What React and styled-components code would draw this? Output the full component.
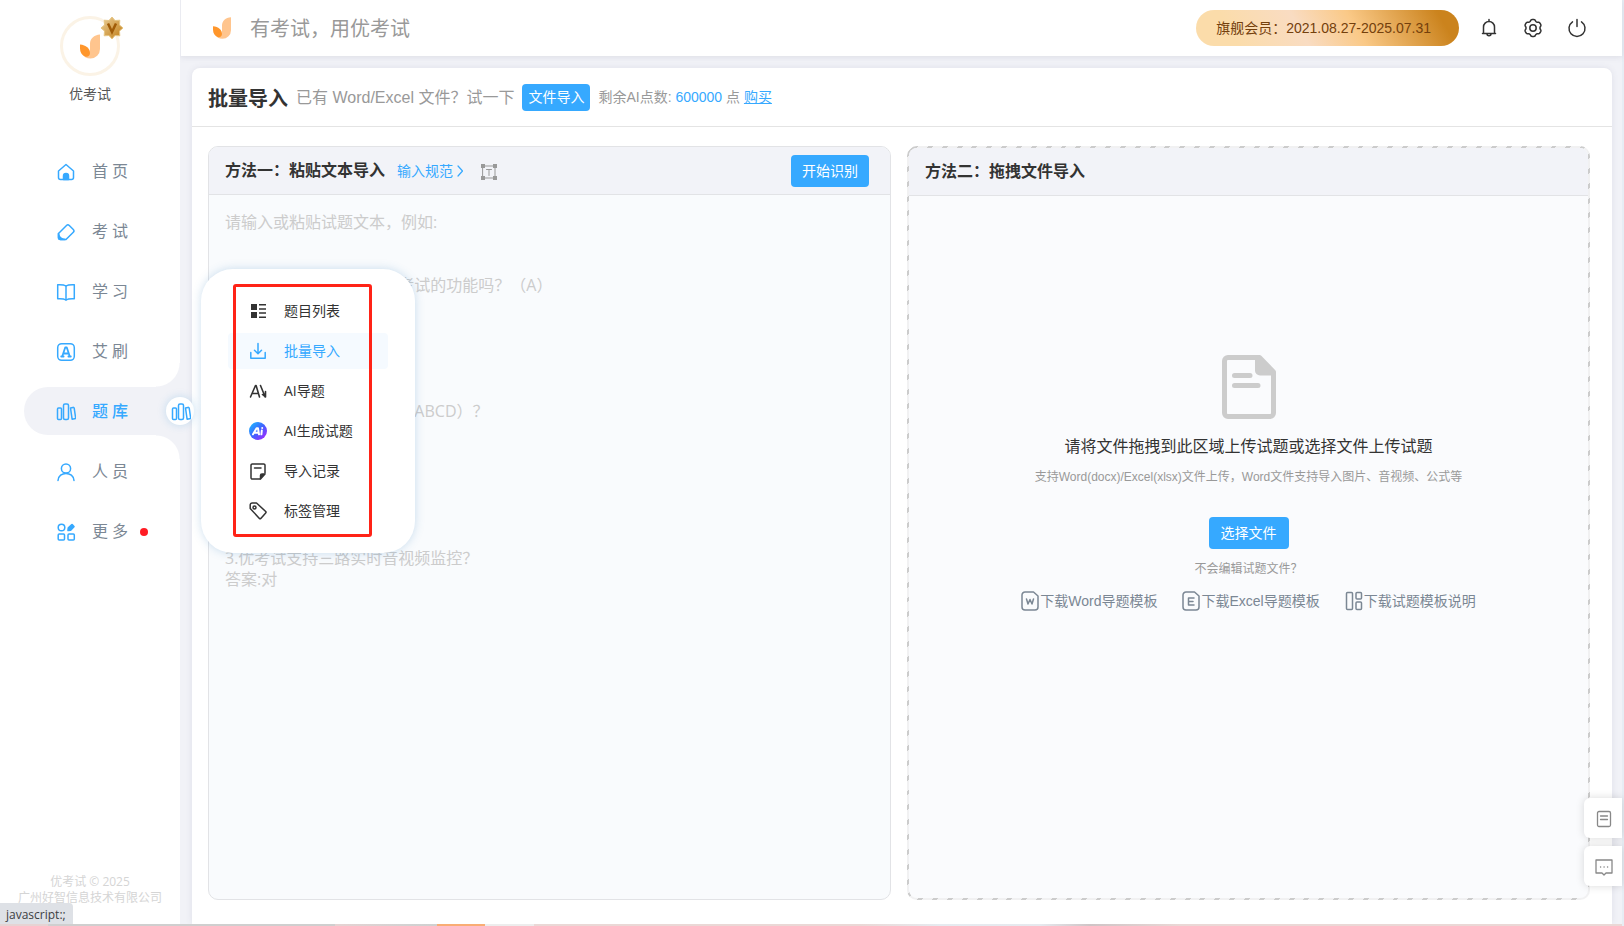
import React from "react";
import styled, { createGlobalStyle, css } from "styled-components";

const BLUE = "#36a9ff";
const CJK = `"Liberation Sans", "Noto Sans CJK SC", sans-serif`;
const UI = `"Open Sans", "Noto Sans CJK SC", sans-serif`;

const Global = createGlobalStyle`
  * { box-sizing: border-box; }
  html, body, #root { height: 100%; }
  body { margin: 0; background: #f1f2f7; font-family: ${CJK}; font-size: 14px; line-height: 20px; color: #333; overflow: hidden; }
  button, textarea, input { font: inherit; }
  button { border: 0; padding: 0; cursor: pointer; }
  svg { display: block; flex: none; }
  h1, h2, p, ul { margin: 0; padding: 0; }
`;

const Page = styled.div`
  min-height: 100vh;
  height: 100%;
  display: flex;
  flex-direction: column;
  border-right: 2px solid #e7edf4;
`;
const Shell = styled.div`
  flex: 1;
  min-height: 0;
  display: flex;
`;
const DesktopEdge = styled.div`
  height: 2px;
  background: linear-gradient(90deg, #e6d3d3 48px, #cfcfcf 48px, #cfcfcf 335px, #e6d3d3 335px, #d2d2d2 410px, #d0d0d0 437px, #f9ad74 437px, #f9ad74 485px, #ededed 485px, #ededed 534px, #ead8d6 534px, #ead8d6 860px, #e6ebf0 940px, #e6e9ee 1040px, #cfc4c6 1090px, #ead8d6 1180px);
`;

/* Sidebar */
const Sidebar = styled.aside`
  position: relative;
  width: 180px;
  flex: none;
  display: flex;
  flex-direction: column;
  background: #fff;
`;
const Profile = styled.div`
  height: 147px;
  padding-top: 16px;
  display: flex;
  flex-direction: column;
  align-items: center;
  gap: 8px;
  color: #555;
`;
const Avatar = styled.div`
  position: relative;
  width: 60px;
  height: 60px;
  border: 3px solid #fbf3e6;
  border-radius: 50%;
  display: flex;
  align-items: center;
  justify-content: center;
`;
const Badge = styled.span`
  position: absolute;
  top: -3px;
  right: -7px;
`;
const Nav = styled.nav`
  display: flex;
  flex-direction: column;
  gap: 12px;
  padding-left: 24px;
`;
const corner = css`
  content: "";
  position: absolute;
  right: 0;
  width: 24px;
  height: 24px;
`;
const NavItem = styled.a`
  position: relative;
  height: 48px;
  padding: 2px 0 0 32px;
  display: flex;
  align-items: center;
  gap: 16px;
  border-radius: 24px 0 0 24px;
  font-size: 16px;
  letter-spacing: 4px;
  text-decoration: none;
  color: #7b8794;
  ${(p) =>
    p.$active &&
    css`
      background: #f1f2f7;
      color: ${BLUE};
      font-weight: 500;
      &::before {
        ${corner}
        bottom: 100%;
        background: radial-gradient(circle at 0 0, #fff 23px, #f1f2f7 24px);
      }
      &::after {
        ${corner}
        top: 100%;
        background: radial-gradient(circle at 0 100%, #fff 23px, #f1f2f7 24px);
      }
    `}
`;
const Dot = styled.i`
  width: 8px;
  height: 8px;
  margin-left: -8px;
  border-radius: 50%;
  background: #ff1c24;
`;
const Copyright = styled.p`
  margin-top: auto;
  padding-bottom: 18px;
  text-align: center;
  font-size: 12px;
  line-height: 16px;
  color: #d5d5d5;
  font-family: ${UI};
`;
const Bubble = styled.button`
  position: absolute;
  z-index: 3;
  top: 397px;
  right: -14px;
  width: 28px;
  height: 28px;
  padding: 2px 0 0 2px;
  display: flex;
  align-items: center;
  justify-content: center;
  border-radius: 50%;
  background: #fff;
  box-shadow: 0 0 8px rgba(54, 150, 220, 0.25);
`;
const Flyout = styled.div`
  position: absolute;
  z-index: 4;
  top: 269px;
  left: 201px;
  width: 214px;
  padding: 24px 27px;
  display: flex;
  flex-direction: column;
  gap: 4px;
  border-radius: 32px;
  background: #fff;
  box-shadow: 0 0 10px rgba(60, 130, 190, 0.25);
`;
const FlyoutItem = styled.a`
  height: 36px;
  padding-left: 21px;
  display: flex;
  align-items: center;
  gap: 17px;
  border-radius: 4px;
  font-family: ${UI};
  color: ${(p) => (p.$active ? BLUE : "#333")};
  background: ${(p) => (p.$active ? "#f5faff" : "transparent")};
  text-decoration: none;
`;
const Highlight = styled.span`
  position: absolute;
  inset: 15px 43px 16px 32px;
  border: 3px solid #ff2317;
  border-radius: 3px;
  pointer-events: none;
`;
const StatusBar = styled.div`
  position: absolute;
  z-index: 5;
  left: 0;
  bottom: 0;
  height: 21px;
  padding: 0 7px 0 6px;
  border-radius: 0 4px 0 0;
  background: #dee1e6;
  font-family: "Open Sans", sans-serif;
  font-size: 12px;
  line-height: 24px;
  color: #3c4043;
`;

/* Top bar */
const Content = styled.div`
  flex: 1;
  min-width: 0;
  display: flex;
  flex-direction: column;
`;
const TopBar = styled.header`
  height: 56px;
  flex: none;
  padding: 0 35px 0 32px;
  display: flex;
  align-items: center;
  border-left: 1px solid #eaebf1;
  background: #fff;
  box-shadow: 0 1px 6px rgba(100, 100, 130, 0.15);
`;
const Slogan = styled.span`
  margin-left: 19px;
  padding-top: 2px;
  font-size: 20px;
  line-height: 28px;
  color: #999;
`;
const Member = styled.div`
  height: 36px;
  margin-left: auto;
  padding: 0 28px 0 20px;
  border-radius: 18px;
  line-height: 37px;
  color: #74400c;
  background: linear-gradient(60deg, #fbdcaa 15%, #f9dcc2 40%, #fac987 60%, #cb831d 92%);
`;
const Tools = styled.div`
  display: flex;
  gap: 24px;
  margin-left: 20px;
`;
const IconButton = styled.button`
  width: 20px;
  height: 20px;
  background: none;
  color: #333;
`;

/* Card */
const Card = styled.main`
  flex: 1;
  min-height: 0;
  margin: 12px 10px 0 12px;
  display: flex;
  flex-direction: column;
  border-radius: 8px 8px 0 0;
  background: #fff;
  box-shadow: 0 0 6px rgba(100, 100, 130, 0.12);
`;
const CardHead = styled.div`
  height: 59px;
  flex: none;
  padding: 0 16px;
  display: flex;
  align-items: center;
  gap: 8px;
  border-bottom: 1px solid #e4e4e4;
  color: #999;
`;
const Title = styled.h1`
  padding-top: 3px;
  font-size: 20px;
  line-height: 28px;
  font-weight: 700;
  color: #333;
`;
const Lead = styled.span`
  padding-top: 1px;
  font-size: 16px;
`;
const Primary = styled.button`
  height: ${(p) => (p.$small ? 27 : 32)}px;
  padding: 0 ${(p) => (p.$small ? 6 : p.$wide ? 12 : 11)}px;
  border-radius: 4px;
  background: ${BLUE};
  color: #fff;
`;
const Points = styled.span`
  b { font-weight: 400; color: ${BLUE}; }
`;
const Link = styled.a`
  color: ${BLUE};
  text-decoration: ${(p) => (p.$plain ? "none" : "underline")};
  display: ${(p) => (p.$plain ? "inline-flex" : "inline")};
  align-items: center;
  gap: 4px;
`;
const Panels = styled.div`
  flex: 1;
  min-height: 0;
  padding: 19px 22px 24px 16px;
  display: grid;
  grid-template-columns: 1fr 1fr;
  gap: 16px;
`;
const Panel = styled.section`
  min-width: 0;
  display: flex;
  flex-direction: column;
  overflow: hidden;
  border: 1px solid #e2e3e6;
  border-radius: 10px;
  background: #f9fbfd;
`;
const DropPanel = styled(Panel)`
  border: 2px solid transparent;
  background:
    linear-gradient(#fafbfd, #fafbfd) padding-box,
    repeating-linear-gradient(-45deg, #ccc 0, #ccc 0.25em, #f1f1f2 0, #f1f1f2 0.75em) border-box;
`;
const PanelHead = styled.div`
  height: 48px;
  flex: none;
  padding: 0 21px 0 16px;
  display: flex;
  align-items: center;
  gap: 12px;
  border-bottom: 1px solid #e2e3e6;
  background: #f2f3f8;
`;
const PanelTitle = styled.h2`
  font-size: 16px;
  line-height: 24px;
  font-weight: 700;
`;
const ImageTool = styled.button`
  margin-left: 4px;
  padding-top: 2px;
  background: none;
`;
const Push = styled.div`
  margin-left: auto;
`;
const Editor = styled.textarea`
  flex: 1;
  padding: 17px 16px;
  border: 0;
  outline: 0;
  resize: none;
  background: transparent;
  font-family: ${UI};
  font-size: 16px;
  line-height: 21px;
  &::placeholder { color: #ccc; opacity: 1; }
`;
const DropBody = styled.div`
  flex: 1;
  padding-top: 159px;
  display: flex;
  flex-direction: column;
  align-items: center;
`;
const DropTitle = styled.p`
  margin-top: 16px;
  font-size: 16px;
  line-height: 24px;
`;
const Note = styled.p`
  margin: ${(p) => (p.$wide ? "8px 0 30px" : "10px 0 12px")};
  font-size: 12px;
  line-height: 20px;
  color: #999;
`;
const Downloads = styled.div`
  display: flex;
  gap: 25px;
`;
const Download = styled.a`
  display: flex;
  align-items: center;
  gap: 1px;
  color: #7b8794;
  text-decoration: none;
`;
const Float = styled.div`
  position: absolute;
  right: 2px;
  bottom: 40px;
  display: flex;
  flex-direction: column;
  gap: 8px;
`;
const FloatButton = styled.button`
  width: 38px;
  height: 40px;
  padding: 2px 0 0 2px;
  display: flex;
  align-items: center;
  justify-content: center;
  border-radius: 6px 0 0 6px;
  background: #fff;
  box-shadow: 0 0 8px rgba(0, 0, 0, 0.15);
`;

/* Icons */
const Svg = ({ s = 20, w = s, vb = "0 0 20 20", sw = 1.5, c = "currentColor", children }) => (
  <svg width={w} height={s} viewBox={vb} fill="none" stroke={c} strokeWidth={sw} strokeLinecap="round" strokeLinejoin="round" aria-hidden="true">
    {children}
  </svg>
);
const Logo = ({ w, h }) => (
  <svg width={w} height={h} viewBox="0 0 20 24" aria-hidden="true">
    <path d="M20 0v14.500A9.500 9.500 0 0 1 10.500 24C6.500 24 3.500 22 2 19c4 3 8 1.500 8-2.500V9.500C10 4 14 .5 20 0Z" fill="#ffc58e" />
    <path d="M0 10c6 .5 10 4 10 8.500 0 3-2.500 4.500-5 3.500C2 20.500 0 18 0 14Z" fill="#ff962b" />
  </svg>
);
const icons = {
  home: <><path d="M2.500 9 10 2.500 17.500 9v6.500a2 2 0 0 1-2 2h-11a2 2 0 0 1-2-2Z" /><path d="M7.500 17.500V14a2.500 2.500 0 0 1 5 0v3.500Z" fill={BLUE} /></>,
  pen: <><path d="M10.500 3.500a2 2 0 0 1 2.800 0l4 4a2 2 0 0 1 0 2.800L10 17.500H4.500a2 2 0 0 1-2-2v-4Z" /><path d="M2.500 11.500c.5 3 3 5.500 6.500 6H4.500a2 2 0 0 1-2-2Z" fill={BLUE} /></>,
  book: <><path d="M10 4C8 2.600 5 2.500 1.700 2.700v14C5 16.500 8 16.600 10 18c2-1.400 5-1.500 8.300-1.300v-14C15 2.500 12 2.600 10 4Z" /><path d="M10 4v14" /></>,
  brush: <><rect x="1.700" y="1.700" width="16.600" height="16.600" rx="4" /><path d="m6.200 14.500 3-9h1.600l3 9M7.500 11.500h5M5.200 14.500h2.400M12.400 14.500h2.400" strokeWidth="1.800" /></>,
  lib: <><rect x="1.500" y="6" width="4" height="11.500" rx="1" /><rect x="7.500" y="2" width="5" height="15.500" rx="1.500" /><path d="m14.500 6 2.500-.6a1 1 0 0 1 1.200.8l1.500 10.200-3.600.8Z" /></>,
  user: <><circle cx="10" cy="6.500" r="4.600" /><path d="M2 18.500c.5-9.500 15.500-9.500 16 0" /></>,
  more: <><circle cx="5.500" cy="5.500" r="3.300" /><rect x="2.200" y="12" width="6.300" height="6" rx="1" /><rect x="12" y="12" width="6.300" height="6" rx="1" /><path d="m12.500 6 3.500-3.200 1.800 1.800L14.500 8l-2.300.3Z" fill={BLUE} strokeWidth="2" /></>,
};

const NAV = [
  ["home", "首页"], ["pen", "考试"], ["book", "学习"], ["brush", "艾刷"],
  ["lib", "题库"], ["user", "人员"], ["more", "更多"],
];

const menuIcons = {
  list: <g stroke="none" fill="currentColor"><path d="M2 2h6v6H2zM2 10h6v6H2zM10 2h7v1.500h-7zM10 6.300h7v1.500h-7zM10 10.200h7v1.500h-7zM10 14.500h7V16h-7z" /></g>,
  load: <><path d="M1.800 10.500v5.700h14.400v-5.700M9 1.500v10M5.500 8.300 9 11.800l3.500-3.500" /></>,
  ai: <path d="m1.500 15 5-11.500h.6l3.400 11.500M3.500 11.500h6M11.500 3.500l4.700 11.500M16.500 9.500v5.500l-3-2.500" strokeWidth="1.600" />,
  gen: (
    <>
      <defs>
        <linearGradient id="aig" x1="0" y1="0" x2="1" y2="1">
          <stop offset="0" stopColor="#17c3ff" /><stop offset=".5" stopColor="#3f62ff" /><stop offset="1" stopColor="#b51cff" />
        </linearGradient>
      </defs>
      <circle cx="9" cy="9" r="9" fill="url(#aig)" stroke="none" />
      <path d="m4 12.300 3.600-6H9l1 6M6 10.700h3.500M12.800 8.500l-.4 3.800M13.200 6v.1" stroke="#fff" strokeWidth="2" />
    </>
  ),
  rec: <><path d="M16 11V3.300A1.300 1.300 0 0 0 14.700 2H3.300A1.300 1.300 0 0 0 2 3.300v12.400A1.300 1.300 0 0 0 3.300 17H11M5.500 6h6.500" /><path d="M11.500 17v-3.500a1.500 1.500 0 0 1 1.500-1.500h3Z" fill="currentColor" /></>,
  tag: <><path d="M1.200 6.500V3a2 2 0 0 1 2-2h4.300l9.200 8.500a1 1 0 0 1 0 1.400L11.800 16.400a1 1 0 0 1-1.400 0Z" /><circle cx="5.500" cy="5.500" r="1.500" /></>,
};
const MENU = [
  ["list", "题目列表"], ["load", "批量导入"], ["ai", "AI导题"],
  ["gen", "AI生成试题"], ["rec", "导入记录"], ["tag", "标签管理"],
];

const SAMPLE = [
  "请输入或粘贴试题文本，例如:", "", "",
  "1.您是否已经全面了解优考试的功能吗？（A）", "A.了解", "B.不了解", "", "", "",
  "2.优考试支持的题型包括（ABCD）？", "A.单选题", "B.多选题", "C.判断题", "D.填空题", "", "",
  "3.优考试支持三路实时音视频监控？", "答案:对",
].join("\n");

/* Six rounded teeth, one pointing straight up. */
const gear = Array.from({ length: 72 }, (_, i) => {
  const a = (i / 72) * Math.PI * 2;
  const r = 7.7 + 0.8 * Math.tanh(2 * Math.cos(a * 6) + 0.6);
  return `${i ? "L" : "M"}${(10 + r * Math.sin(a)).toFixed(2)} ${(10 - r * Math.cos(a)).toFixed(2)}`;
}).join("") + "Z";

export default function App() {
  return (
    <>
      <Global />
      <Page>
        <Shell>
          <Sidebar>
            <Profile>
              <Avatar>
                <Logo w={20} h={25} />
                <Badge>
                  <svg width="24" height="24" viewBox="0 0 24 24" aria-hidden="true">
                    <defs><linearGradient id="bdg" x1="0" y1="0" x2="1" y2="1"><stop offset="0" stopColor="#ecd09a" /><stop offset="1" stopColor="#c07c14" /></linearGradient></defs>
                    <path d="m12 1 3 3.500 4.800-.3-.3 4.800L23 12l-3.500 3 .3 4.800-4.800-.3L12 23l-3-3.500-4.800.3.300-4.800L1 12l3.500-3-.3-4.800 4.800.3Z" fill="url(#bdg)" stroke="#e6c684" />
                    <path d="m8 7.500 4 8.500 4-8.500" fill="none" stroke="#a05c08" strokeWidth="2.500" />
                  </svg>
                </Badge>
              </Avatar>
              优考试
            </Profile>
            <Nav>
              {NAV.map(([id, label]) => (
                <NavItem key={id} href="#" $active={id === "lib"}>
                  <Svg s={20} c={BLUE}>{icons[id]}</Svg>
                  {label}
                  {id === "more" && <Dot />}
                </NavItem>
              ))}
            </Nav>
            <Copyright>优考试 © 2025<br />广州好智信息技术有限公司</Copyright>
            <Bubble aria-label="题库"><Svg s={20} c={BLUE}>{icons.lib}</Svg></Bubble>
            <Flyout>
              {MENU.map(([id, label]) => (
                <FlyoutItem key={id} href="#" $active={id === "load"}>
                  <Svg s={18} vb="0 0 18 18">{menuIcons[id]}</Svg>
                  {label}
                </FlyoutItem>
              ))}
              <Highlight />
            </Flyout>
            <StatusBar>javascript:;</StatusBar>
          </Sidebar>

          <Content>
            <TopBar>
              <Logo w={18} h={22} />
              <Slogan>有考试，用优考试</Slogan>
              <Member>旗舰会员：2021.08.27-2025.07.31</Member>
              <Tools>
                <IconButton aria-label="通知">
                  <Svg><path d="M4.500 15.500V9a5.500 5.500 0 0 1 11 0v6.500M3.500 15.500h13M8 15.800a2 2 0 0 0 4 0M10 1.500V3" /></Svg>
                </IconButton>
                <IconButton aria-label="设置">
                  <Svg><path d={gear} /><circle cx="10" cy="10" r="3.200" /></Svg>
                </IconButton>
                <IconButton aria-label="退出">
                  <Svg><path d="M10 1.500v7M14.500 3.800a8 8 0 1 1-9 0" /></Svg>
                </IconButton>
              </Tools>
            </TopBar>

            <Card>
              <CardHead>
                <Title>批量导入</Title>
                <Lead>已有 Word/Excel 文件？试一下</Lead>
                <Primary $small>文件导入</Primary>
                <Points>剩余AI点数: <b>600000</b> 点 <Link href="#">购买</Link></Points>
              </CardHead>
              <Panels>
                <Panel>
                  <PanelHead>
                    <PanelTitle><label htmlFor="source">方法一：粘贴文本导入</label></PanelTitle>
                    <Link $plain href="#">
                      输入规范
                      <Svg s={12} w={7} vb="0 0 7 12" sw={1.2}><path d="m1 1 4.500 5L1 11" /></Svg>
                    </Link>
                    <ImageTool aria-label="文本框">
                      <Svg s={18} vb="0 0 18 18" c="#999" sw={1}>
                        <path d="M3 3h12v12H3zM6.500 6.500h5M9 6.500v6" />
                        <path d="M1 1h4v4H1zM13 1h4v4h-4zM1 13h4v4H1zM13 13h4v4h-4z" fill="#999" stroke="none" />
                      </Svg>
                    </ImageTool>
                    <Push><Primary>开始识别</Primary></Push>
                  </PanelHead>
                  <Editor id="source" placeholder={SAMPLE} />
                </Panel>

                <DropPanel>
                  <PanelHead><PanelTitle>方法二：拖拽文件导入</PanelTitle></PanelHead>
                  <DropBody>
                    <Svg s={64} w={54} vb="0 0 54 64" c="#ccc" sw={5}>
                      <path d="M6 2.500h31.500L51.500 17v41a3.500 3.500 0 0 1-3.500 3.500H6A3.500 3.500 0 0 1 2.500 58V6A3.500 3.500 0 0 1 6 2.500Z" />
                      <path d="M33 3h5l14 14v3.500H38a5 5 0 0 1-5-5Z" fill="#ccc" stroke="none" />
                      <path d="M12.500 20.500H28M12.500 30.500H36" />
                    </Svg>
                    <DropTitle>请将文件拖拽到此区域上传试题或选择文件上传试题</DropTitle>
                    <Note $wide>支持Word(docx)/Excel(xlsx)文件上传，Word文件支持导入图片、音视频、公式等</Note>
                    <Primary $wide>选择文件</Primary>
                    <Note>不会编辑试题文件？</Note>
                    <Downloads>
                      <Download href="#">
                        <Svg s={20} w={18} vb="0 0 18 20"><path d="M4 1h8.500L17 5v11a3 3 0 0 1-3 3H4a3 3 0 0 1-3-3V4a3 3 0 0 1 3-3ZM5.500 8l1.500 5 2-4.500 2 4.500 1.500-5" /></Svg>
                        下载Word导题模板
                      </Download>
                      <Download href="#">
                        <Svg s={20} w={18} vb="0 0 18 20"><path d="M4 1h8.500L17 5v11a3 3 0 0 1-3 3H4a3 3 0 0 1-3-3V4a3 3 0 0 1 3-3ZM12 7H6.500v7H12M6.500 10.500H11" /></Svg>
                        下载Excel导题模板
                      </Download>
                      <Download href="#">
                        <Svg s={20} w={18} vb="0 0 18 20"><rect x="1.500" y="1.500" width="6" height="17" rx="1" /><rect x="11" y="1.500" width="5.500" height="6.500" rx="1" /><rect x="11" y="11" width="5.500" height="7.500" rx="1" /></Svg>
                        下载试题模板说明
                      </Download>
                    </Downloads>
                  </DropBody>
                </DropPanel>
              </Panels>
            </Card>
          </Content>
        </Shell>
        <DesktopEdge />
        <Float>
          <FloatButton aria-label="文档">
            <Svg s={18} vb="0 0 18 18" c="#888" sw={1.3}><rect x="2.500" y="1.500" width="13" height="15" rx="1.500" /><path d="M5.500 6h7M5.500 9.500h7" /></Svg>
          </FloatButton>
          <FloatButton aria-label="反馈">
            <Svg s={18} vb="0 0 18 18" c="#888" sw={1.3}><path d="M1 2h16v13h-6l-2 2-2-2H1ZM5.500 9h.2M9 9h.2M12.500 9h.2" /></Svg>
          </FloatButton>
        </Float>
      </Page>
    </>
  );
}
